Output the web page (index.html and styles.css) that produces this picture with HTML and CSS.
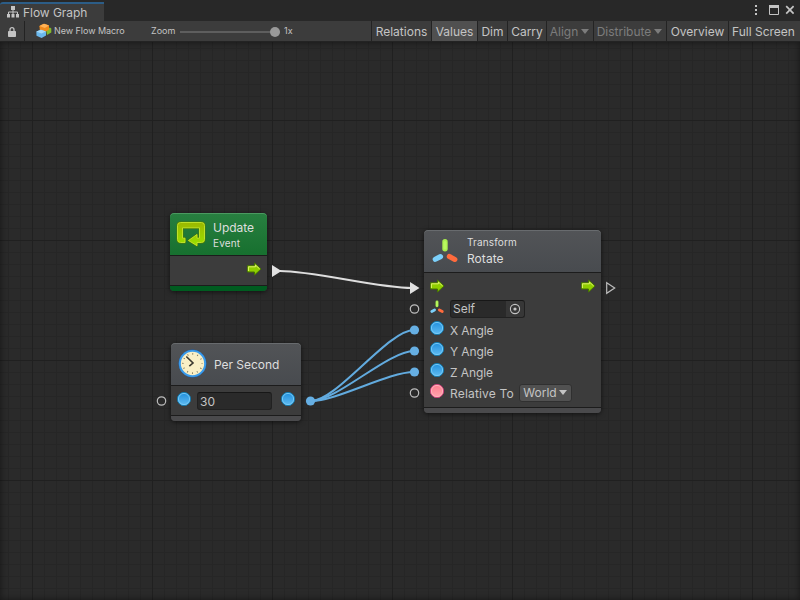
FILE: index.html
```html
<!DOCTYPE html>
<html lang="en">
<head>
  <meta charset="UTF-8">
  <title>Flow Graph</title>
  <link rel="stylesheet" href="styles.css">
</head>
<body>
  <!-- shared icons -->
  <svg class="defs" width="0" height="0">
    <defs>
      <linearGradient id="lime" x1="0" y1="0" x2="0" y2="1">
        <stop offset="0" stop-color="#9cb800"/>
        <stop offset="1" stop-color="#99e000"/>
      </linearGradient>
      <linearGradient id="blue" x1="0" y1="0" x2="0" y2="1">
        <stop offset="0" stop-color="#1f8edc"/>
        <stop offset="1" stop-color="#62bdf2"/>
      </linearGradient>
      <linearGradient id="pink" x1="0" y1="0" x2="0" y2="1">
        <stop offset="0" stop-color="#ff7c8e"/>
        <stop offset="1" stop-color="#ffa5ae"/>
      </linearGradient>
      <symbol id="arrow" viewBox="0 0 16 16">
        <path d="M1.500 4.800h7V2L15 8l-6.500 6v-3H1.500z" fill="#8fce00" stroke="#477600" stroke-width="1"/>
        <path d="M2.400 10V5.800h7V4l4.200 3.900" fill="none" stroke="#e0f36c" stroke-width="1"/>
      </symbol>
      <symbol id="float" viewBox="0 0 16 16">
        <circle cx="8" cy="8" r="6.600" fill="url(#blue)" stroke="#1579ac" stroke-width="1"/>
        <circle cx="8" cy="8" r="5.600" fill="none" stroke="#7accf7" stroke-width=".9"/>
      </symbol>
      <symbol id="enum" viewBox="0 0 16 16">
        <circle cx="8" cy="8" r="6.600" fill="url(#pink)" stroke="#c8427a" stroke-width="1"/>
        <circle cx="8" cy="8" r="5.600" fill="none" stroke="#ffb4bd" stroke-width=".9"/>
      </symbol>
      <symbol id="transform" viewBox="0 0 28 26">
        <path d="M14 3.700v7" stroke="#a9ee4e" stroke-width="5.400" stroke-linecap="round"/>
        <path d="M14 4.500v5.500" stroke="#b9f860" stroke-width="3" stroke-linecap="round"/>
        <path d="M4.300 21.300l5.200-2.700" stroke="#7cd0fb" stroke-width="5.200" stroke-linecap="round"/>
        <path d="M18.400 18.400l5.400 3" stroke="#ff6b3d" stroke-width="5.200" stroke-linecap="round"/>
      </symbol>
    </defs>
  </svg>

  <div class="window">
    <div class="titlebar">
      <div class="tab">
        <svg class="tab-icon" width="12" height="12" viewBox="0 0 12 12">
          <path d="M4 0h4v4H4zM0 8h3v3.400H0zM4.500 8h3v3.400h-3zM9 8h3v3.400H9z" fill="#c4c4c4"/>
          <path d="M6 4v4M1.500 8V6h9v2" fill="none" stroke="#c4c4c4"/>
        </svg>
        <span>Flow Graph</span>
      </div>
      <svg class="window-buttons" width="44" height="14" viewBox="0 0 44 14">
        <path d="M5 2h2v2H5zM5 6h2v2H5zM5 10h2v2H5z" fill="#c4c4c4"/>
        <path d="M19.500 3.500h9v8h-9z" fill="none" stroke="#c4c4c4"/>
        <path d="M19 2h10v3H19z" fill="#c4c4c4"/>
        <path d="M36.200 3.200l7.400 7.400M43.600 3.200l-7.400 7.400" stroke="#c4c4c4" stroke-width="1.700"/>
      </svg>
    </div>

    <div class="toolbar">
      <div class="lock">
        <svg width="8" height="10" viewBox="0 0 8 10">
          <path d="M.5 4.500h7v5h-7z" fill="#c4c4c4" stroke="#c4c4c4" stroke-linejoin="round"/>
          <path d="M2 4.500V2.700a2 2 0 0 1 4 0v1.800" fill="none" stroke="#c4c4c4" stroke-width="1.300"/>
        </svg>
      </div>
      <svg class="macro-icon" width="16" height="16" viewBox="0 0 16 16">
        <path d="M10 6l4-1.500 1.300 1v4L11 12z" fill="#83ba2d"/>
        <path d="M3.500 3.200Q3.500 2.500 8 .8q1 0 5 1.700v4.200L8.800 9 3.800 7z" fill="#f08a1c"/>
        <path d="M3.500 3L8 .8l5 1.700-4.200 2.400z" fill="#ffb256"/>
        <path d="M.3 8.600L5 6.700l5 1.700v4.200L5.600 15 .5 12.800z" fill="#6bb8ec"/>
        <path d="M.3 8.600L5 6.700l5 1.700-4.600 2.200z" fill="#a7daf8"/>
      </svg>
      <span class="macro-name">New Flow Macro</span>
      <span class="zoom-label">Zoom</span>
      <div class="slider"><div class="knob"></div></div>
      <span class="zoom-value">1x</span>
      <div class="buttons">
        <div class="button relations">Relations</div>
        <div class="button values active">Values</div>
        <div class="button dim">Dim</div>
        <div class="button carry">Carry</div>
        <div class="button align disabled">Align<i class="caret"></i></div>
        <div class="button distribute disabled">Distribute<i class="caret"></i></div>
        <div class="button overview">Overview</div>
        <div class="button full">Full Screen</div>
      </div>
    </div>

    <div class="canvas">
      <svg class="wires" width="800" height="558" viewBox="0 42 800 558">
        <g fill="none" stroke="#dedede" stroke-width="2">
          <path d="M280 271C314 271 378 288 412 288"/>
        </g>
        <path d="M272 265l9.500 6-9.500 6zM410 282l9.500 6-9.500 6z" fill="#e2e2e2"/>
        <g fill="none" stroke="#62abdf" stroke-width="2">
          <path d="M311 401C337 401 388 330 414 330"/>
          <path d="M311 401C337 401 388 351 414 351"/>
          <path d="M311 401C337 401 388 372 414 372"/>
        </g>
        <g fill="#66afe3">
          <circle cx="310.500" cy="401" r="4.600"/>
          <circle cx="414.500" cy="330" r="4.600"/>
          <circle cx="414.500" cy="351" r="4.600"/>
          <circle cx="414.500" cy="372" r="4.600"/>
        </g>
        <g fill="none" stroke="#bdbdbd" stroke-width="1.200">
          <circle cx="161.500" cy="401" r="4.200"/>
          <circle cx="414.500" cy="309" r="4.200"/>
          <circle cx="414.500" cy="393" r="4.200"/>
          <path d="M606.700 282.700l8 5.300-8 5.300z"/>
        </g>
      </svg>

      <div class="node update">
        <div class="node-header">
          <svg width="32" height="32" viewBox="0 0 32 32">
            <g fill="url(#lime)" stroke-linejoin="round">
              <path d="M5.500 4.500h21q3 0 3 3v14q0 3-3 3H22v3.200L13.500 22.500l8.500-6v3.700h2.500V9.800h-17v10.400H10v4.300H5.500q-3 0-3-3v-14q0-3 3-3z" stroke="#4f7a00" stroke-width="1.800"/>
              <path d="M5.500 4.500h21q3 0 3 3v14q0 3-3 3H22v3.200L13.500 22.500l8.500-6v3.700h2.500V9.800h-17v10.400H10v4.300H5.500q-3 0-3-3v-14q0-3 3-3z" stroke="#c6e62e" stroke-width=".9"/>
            </g>
          </svg>
          <div class="titles">
            <div class="title">Update</div>
            <div class="subtitle">Event</div>
          </div>
        </div>
        <div class="node-body">
          <svg class="port-icon out" width="16" height="16"><use href="#arrow"/></svg>
        </div>
        <div class="node-footer"></div>
      </div>

      <div class="node per-second">
        <div class="node-header">
          <svg width="32" height="32" viewBox="0 0 32 32">
            <circle cx="16.500" cy="16.500" r="13.600" fill="#f9efc6" stroke="#1762b4" stroke-width="1"/>
            <circle cx="16.500" cy="16.500" r="12.600" fill="none" stroke="#3b9bea" stroke-width="1.900"/>
            <circle cx="16.500" cy="16.500" r="9.600" fill="none" stroke="#81785a" stroke-width="1.600" stroke-dasharray=".9 4.127" stroke-dashoffset=".45"/>
            <path d="M10.300 9.500l6.700 6.500-3.700 3.200" fill="none" stroke="#3c3930" stroke-width="1.600"/>
          </svg>
          <div class="title">Per Second</div>
        </div>
        <div class="node-body">
          <svg class="port-icon" width="16" height="16"><use href="#float"/></svg>
          <div class="field number">30</div>
          <svg class="port-icon out" width="16" height="16"><use href="#float"/></svg>
        </div>
        <div class="node-footer"></div>
      </div>

      <div class="node rotate">
        <div class="node-header">
          <svg width="28" height="26"><use href="#transform"/></svg>
          <div class="titles">
            <div class="subtitle">Transform</div>
            <div class="title">Rotate</div>
          </div>
        </div>
        <div class="node-body">
          <div class="row">
            <svg class="port-icon" width="16" height="16"><use href="#arrow"/></svg>
            <svg class="port-icon out" width="16" height="16"><use href="#arrow"/></svg>
          </div>
          <div class="row">
            <svg class="port-icon" width="16" height="14"><use href="#transform"/></svg>
            <div class="field object">Self
              <svg width="12" height="12" viewBox="0 0 12 12">
                <circle cx="6" cy="6" r="4.600" fill="none" stroke="#c4c4c4" stroke-width="1.100"/>
                <circle cx="6" cy="6" r="1.600" fill="#c4c4c4"/>
              </svg>
            </div>
          </div>
          <div class="row">
            <svg class="port-icon" width="16" height="16"><use href="#float"/></svg>
            <span class="label">X Angle</span>
          </div>
          <div class="row">
            <svg class="port-icon" width="16" height="16"><use href="#float"/></svg>
            <span class="label">Y Angle</span>
          </div>
          <div class="row">
            <svg class="port-icon" width="16" height="16"><use href="#float"/></svg>
            <span class="label">Z Angle</span>
          </div>
          <div class="row">
            <svg class="port-icon" width="16" height="16"><use href="#enum"/></svg>
            <span class="label relative">Relative To</span>
            <div class="dropdown">World<i class="caret"></i></div>
          </div>
        </div>
        <div class="node-footer"></div>
      </div>
    </div>
  </div>
</body>
</html>
```

FILE: styles.css
```css
* {
  box-sizing: border-box;
}
body {
  margin: 0;
  background: #282828;
  color: #c4c4c4;
  font-family: Inter, sans-serif;
  font-size: 12px;
  overflow: hidden;
}
svg {
  display: block;
  flex-shrink: 0;
}
.defs {
  position: absolute;
}
.window {
  width: 800px;
  height: 600px;
  display: flex;
  flex-direction: column;
}

/* title bar */
.titlebar {
  height: 21px;
  display: flex;
  justify-content: space-between;
  background: #282828;
}
.tab {
  width: 104px;
  height: 19px;
  margin-top: 2px;
  padding-left: 7px;
  display: flex;
  align-items: center;
  gap: 4px;
  background: #3c3c3c;
  border-top: 2px solid #2c5d87;
  border-radius: 3px 0 0 0;
  letter-spacing: -0.05px;
}
.tab-icon {
  margin-top: -1px;
}
.window-buttons {
  margin: 3px 6px 0 0;
}

/* toolbar */
.toolbar {
  height: 21px;
  display: flex;
  align-items: center;
  background: #3c3c3c;
  border-bottom: 1px solid #232323;
}
.lock {
  width: 25px;
  height: 20px;
  padding-top: 1px;
  display: flex;
  align-items: center;
  justify-content: center;
  border-right: 1px solid #232323;
}
.macro-icon {
  margin: -1px 0 0 11px;
}
.macro-name {
  width: 97px;
  margin-left: 2px;
  padding-bottom: 1px;
  font-size: 9px;
  letter-spacing: -0.05px;
}
.zoom-label {
  width: 29px;
  padding-bottom: 1px;
  font-size: 9px;
}
.slider {
  width: 100px;
  height: 2px;
  margin-top: 1px;
  display: flex;
  align-items: center;
  justify-content: flex-end;
  background: #5e5e5e;
}
.knob {
  width: 10px;
  height: 10px;
  border-radius: 50%;
  background: #999;
}
.zoom-value {
  margin-left: 4px;
  padding-bottom: 1px;
  font-size: 9px;
}
.buttons {
  display: flex;
  margin-left: auto;
}
.button {
  height: 20px;
  line-height: 21px;
  border-left: 1px solid #232323;
  display: flex;
  align-items: center;
  justify-content: center;
  white-space: nowrap;
}
.relations { width: 60px; }
.values { width: 46px; }
.dim { width: 30px; }
.carry { width: 39px; }
.align { width: 47px; padding-right: 1px; }
.distribute { width: 73px; padding-right: 1px; }
.overview { width: 62px; }
.full { width: 72px; padding-right: 2px; }
.active {
  background: #505050;
}
.disabled {
  color: #7c7c7c;
}
.caret {
  margin-left: 3px;
  border: 4px solid transparent;
  border-top: 5px solid currentColor;
  border-bottom: 0;
}

/* graph canvas, major lines every 120px and minor every 12px */
.canvas {
  position: relative;
  flex: 1;
  background-color: #2a2a2a;
  background-image:
    linear-gradient(90deg, #202020 1px, transparent 1px),
    linear-gradient(#202020 1px, transparent 1px),
    linear-gradient(90deg, #262626 1px, transparent 1px),
    linear-gradient(#262626 1px, transparent 1px);
  background-size: 120px 120px, 120px 120px, 12px 12px, 12px 12px;
  background-position: 32px 0, 0 78px, 8px 0, 0 6px;
  box-shadow: inset 0 0 7px rgba(0, 0, 0, 0.5);
}
.wires {
  position: absolute;
  left: 0;
  top: 0;
}

/* nodes */
.node {
  position: absolute;
  border-radius: 4px;
  overflow: hidden;
  background: #3c3c3c;
  box-shadow: 0 1px 5px rgba(0, 0, 0, 0.6);
}
.update {
  left: 170px;
  top: 171px;
  width: 97px;
}
.per-second {
  left: 171px;
  top: 301px;
  width: 130px;
}
.rotate {
  left: 424px;
  top: 188px;
  width: 177px;
}
.node-header {
  height: 42px;
  padding-left: 5px;
  display: flex;
  align-items: center;
  gap: 6px;
  color: #dedede;
  background: linear-gradient(#525457, #484b4f);
  border-radius: 4px 4px 0 0;
  box-shadow: inset 0 1px 0 #686b6e;
}
.update .node-header {
  background: linear-gradient(#287f40, #17702f);
  box-shadow: inset 0 1px 0 #4b9960;
}
.title {
  line-height: 16px;
  letter-spacing: 0.05px;
}
.subtitle {
  font-size: 10px;
  line-height: 16px;
  letter-spacing: 0.16px;
}
.update .titles {
  padding-top: 3px;
}
.update .title {
  letter-spacing: -0.05px;
}
.update .subtitle {
  line-height: 15px;
}
.per-second .node-header svg {
  margin-top: -2px;
}
.per-second .title {
  margin-top: 1px;
  letter-spacing: -0.03px;
}
.rotate .node-header {
  padding-left: 7px;
  gap: 8px;
}
.rotate .subtitle {
  margin-top: -1px;
  line-height: 17px;
}
.node-body {
  display: flex;
  align-items: center;
  height: 31px;
  padding: 0 5px;
  border-top: 1px solid #1c1c1c;
  border-bottom: 1px solid #1c1c1c;
}
.node-footer {
  height: 5px;
  background: #4a4a4c;
}
.update .node-footer {
  background: #005c20;
}
.port-icon {
  margin-top: -4px;
}
.out {
  margin-left: auto;
}
.rotate .node-body {
  height: 136px;
  padding: 4px 5px;
  display: block;
}
.row {
  height: 21px;
  display: flex;
  align-items: center;
}
.label {
  margin-left: 5px;
  padding-top: 2px;
  letter-spacing: -0.1px;
}
.relative {
  width: 69px;
  letter-spacing: 0.18px;
}
.field {
  height: 18px;
  line-height: 18px;
  background: #2a2a2a;
  border: 1px solid #212121;
  border-top-color: #171717;
  border-radius: 3px;
  padding-left: 2px;
}
.number {
  width: 75px;
  margin-left: 5px;
}
.object {
  width: 75px;
  margin-left: 5px;
  display: flex;
  align-items: center;
  justify-content: space-between;
  padding-right: 3px;
  background: linear-gradient(90deg, #2a2a2a 55px, #373737 55px);
}
.dropdown {
  width: 53px;
  height: 18px;
  padding-right: 1px;
  display: flex;
  align-items: center;
  justify-content: center;
  background: #515151;
  border: 1px solid #303030;
  border-radius: 3px;
}
.dropdown .caret {
  margin-left: 2px;
}
```
